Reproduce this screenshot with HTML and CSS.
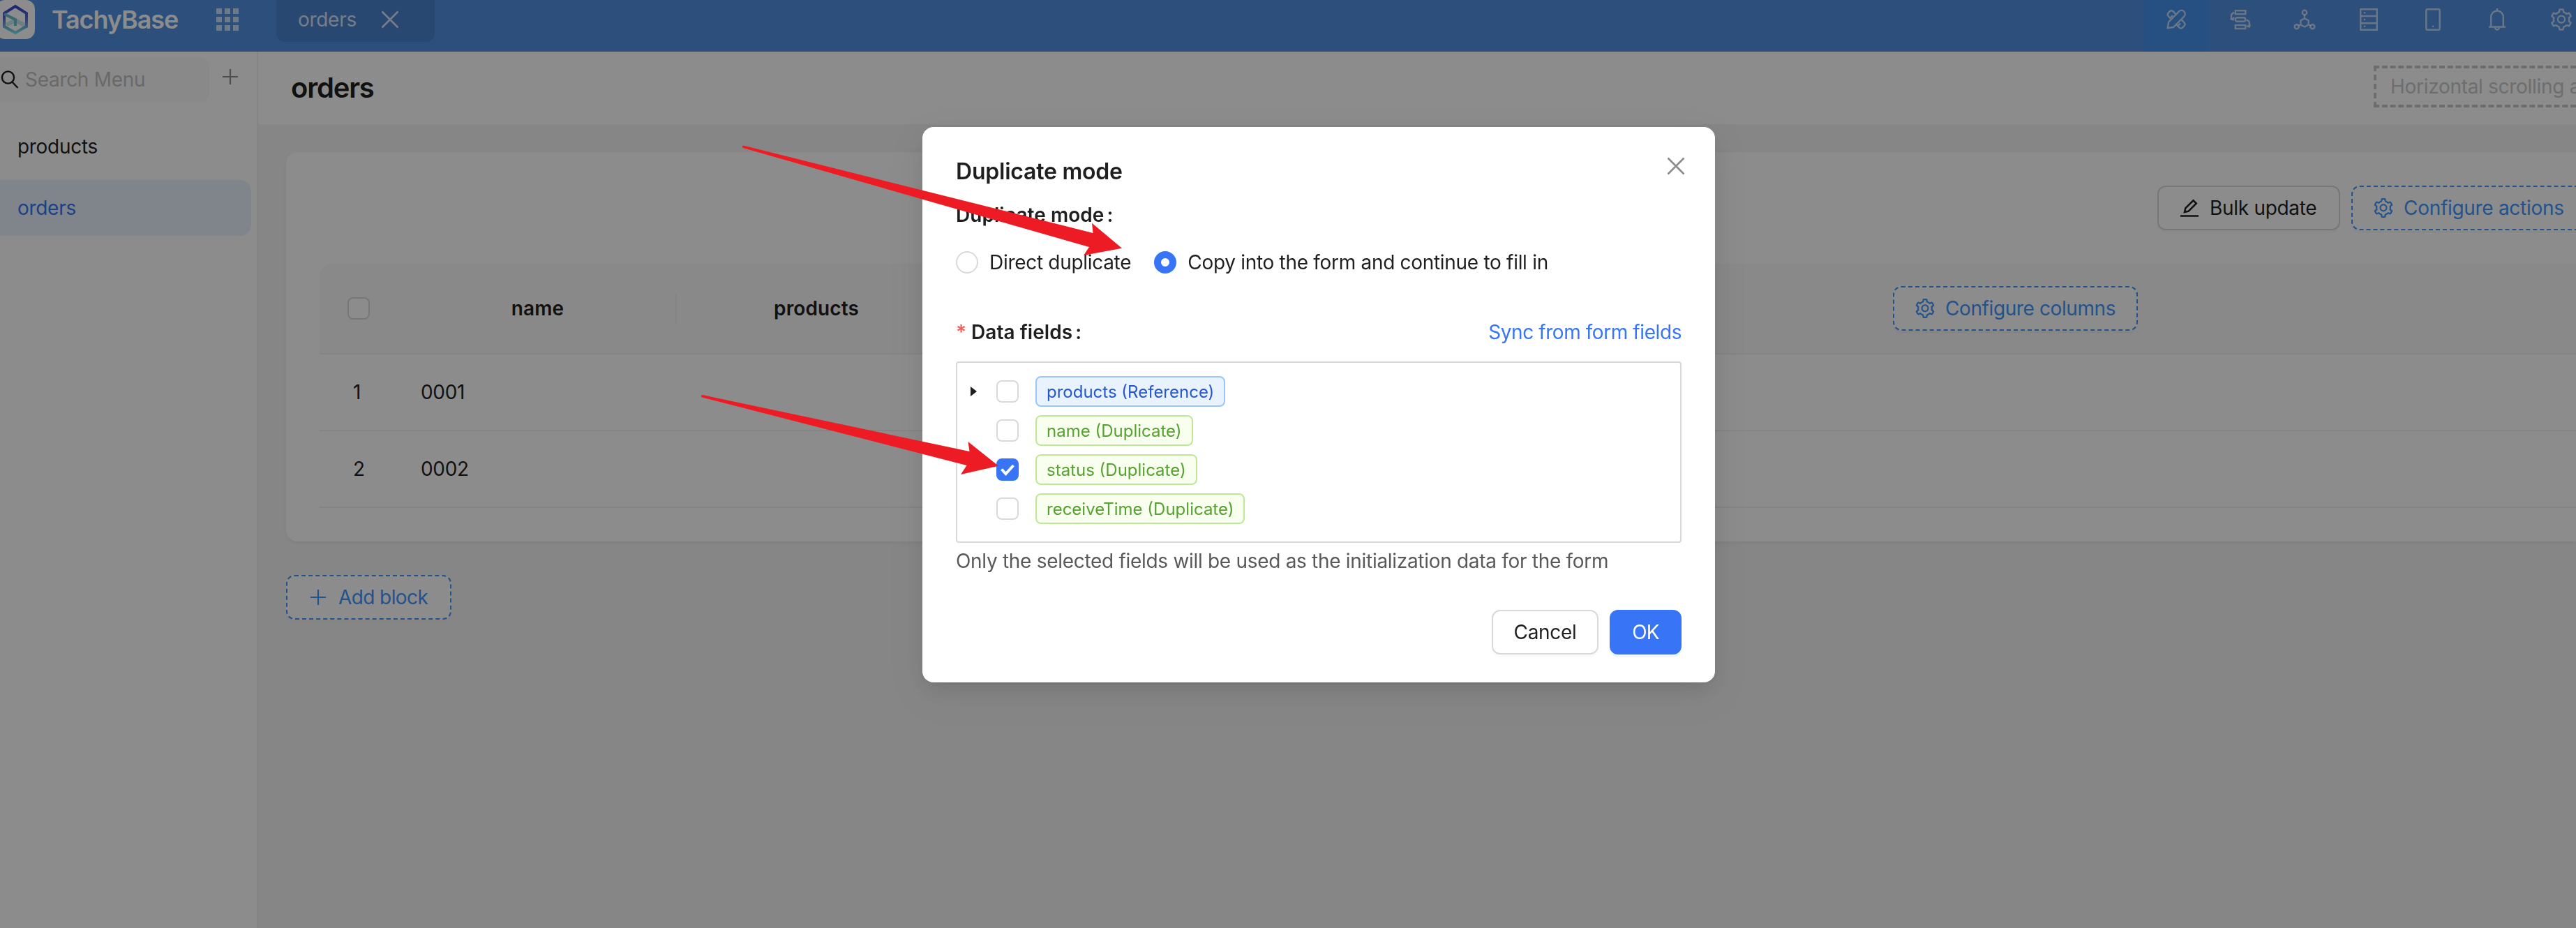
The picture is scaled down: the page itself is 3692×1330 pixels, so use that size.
FILE: index.html
```html
<!DOCTYPE html>
<html lang="en">
<head>
<meta charset="utf-8">
<title>TachyBase - orders</title>
<link rel="stylesheet" href="styles.css">
</head>
<body>
<svg class="sprite" aria-hidden="true">
  <symbol id="gear" viewBox="0 0 1024 1024"><path fill="currentColor" d="M924.8 625.7l-65.5-56c3.1-19 4.7-38.4 4.7-57.8s-1.6-38.8-4.7-57.8l65.5-56a32.03 32.03 0 009.3-35.2l-.9-2.6a443.74 443.74 0 00-79.7-137.9l-1.8-2.1a32.12 32.12 0 00-35.1-9.5l-81.3 28.9c-30-24.6-63.5-44-99.7-57.6l-15.7-85a32.05 32.05 0 00-25.8-25.7l-2.7-.5c-52.1-9.4-106.9-9.4-159 0l-2.7.5a32.05 32.05 0 00-25.8 25.7l-15.8 85.4a351.86 351.86 0 00-99 57.4l-81.9-29.1a32 32 0 00-35.1 9.5l-1.8 2.1a446.02 446.02 0 00-79.7 137.9l-.9 2.6c-4.5 12.5-.8 26.5 9.3 35.2l66.3 56.6c-3.1 18.8-4.6 38-4.6 57.1 0 19.2 1.5 38.4 4.6 57.1L99 625.5a32.03 32.03 0 00-9.3 35.2l.9 2.6c18.1 50.4 44.9 96.9 79.7 137.9l1.8 2.1a32.12 32.12 0 0035.1 9.5l81.9-29.1c29.8 24.5 63.1 43.9 99 57.4l15.8 85.4a32.05 32.05 0 0025.8 25.7l2.7.5a449.4 449.4 0 00159 0l2.7-.5a32.05 32.05 0 0025.8-25.7l15.7-85a350 350 0 0099.7-57.6l81.3 28.9a32 32 0 0035.1-9.5l1.8-2.1c34.8-41.1 61.6-87.5 79.7-137.9l.9-2.6c4.5-12.3.8-26.3-9.3-35zM788.3 465.9c2.5 15.1 3.8 30.6 3.8 46.1s-1.3 31-3.8 46.1l-6.6 40.1 74.7 63.9a370.03 370.03 0 01-42.6 73.6L721 702.8l-31.4 25.8c-23.9 19.6-50.5 35-79.3 45.8l-38.1 14.3-17.9 97a377.5 377.5 0 01-85 0l-17.9-97.2-37.8-14.5c-28.5-10.8-55-26.2-78.7-45.7l-31.4-25.9-93.4 33.2c-17-22.9-31.2-47.6-42.6-73.6l75.5-64.5-6.5-40c-2.4-14.9-3.7-30.3-3.7-45.5 0-15.3 1.2-30.6 3.7-45.5l6.5-40-75.5-64.5c11.3-26.1 25.6-50.7 42.6-73.6l93.4 33.2 31.4-25.9c23.7-19.5 50.2-34.9 78.7-45.7l37.9-14.3 17.9-97.2c28.1-3.2 56.8-3.2 85 0l17.9 97 38.1 14.3c28.7 10.8 55.4 26.2 79.3 45.8l31.4 25.8 92.8-32.9c17 22.9 31.2 47.6 42.6 73.6L781.8 426l6.5 39.9zM512 326c-97.2 0-176 78.8-176 176s78.8 176 176 176 176-78.8 176-176-78.8-176-176-176zm79.2 255.2A111.6 111.6 0 01512 614c-29.9 0-58-11.7-79.2-32.8A111.6 111.6 0 01400 502c0-29.9 11.7-58 32.8-79.2C454 401.6 482.1 390 512 390c29.9 0 58 11.6 79.2 32.8A111.6 111.6 0 01624 502c0 29.9-11.7 58-32.8 79.2z"/></symbol>
  <symbol id="plus" viewBox="0 0 28 28"><path d="M14 3v22M3 14h22" fill="none" stroke="currentColor" stroke-width="2.2"/></symbol>
  <symbol id="close" viewBox="0 0 32 32"><path d="M4.500 4.500l23 23M27.500 4.500l-23 23" fill="none" stroke="currentColor" stroke-width="2.600"/></symbol>
</svg>

<div class="app">
  <header class="topbar">
    <svg class="logo" viewBox="0 0 56 56">
      <defs><linearGradient id="lg" x1="0" y1="0" x2="0" y2="1"><stop offset="0" stop-color="#2f45d6"/><stop offset=".45" stop-color="#6068cc"/><stop offset="1" stop-color="#6fe2ea"/></linearGradient></defs>
      <rect width="56" height="56" rx="13" fill="#fff"/>
      <path d="M14 33l14-7 16 8v7l-5-3-11-5-12 5z" fill="#c3e9ec"/>
      <path d="M38.500 40.500L44 38V19L28 9 12 19v19l16 9 13-7.500" fill="none" stroke="url(#lg)" stroke-width="4"/>
      <path d="M12 20l16 8v9" fill="none" stroke="#63bfd0" stroke-width="4"/>
    </svg>
    <span class="brand">TachyBase</span>
    <svg class="apps" viewBox="0 0 32 32"><path fill="currentColor" d="M0 0h8v8H0zM12 0h8v8h-8zM24 0h8v8h-8zM0 12h8v8H0zM12 12h8v8h-8zM24 12h8v8h-8zM0 24h8v8H0zM12 24h8v8h-8zM24 24h8v8h-8z"/></svg>
    <div class="tab"><span>orders</span><svg class="i32"><use href="#close"/></svg></div>
    <nav class="tools">
      <span class="tool active"><svg viewBox="0 0 36 36"><path d="M5.700 30.200l1.300-8.500L22 6.300a5 5 0 0 1 7.200.3 5 5 0 0 1 .2 6.900L14 29zM17.500 10.500l-4-4.300a3.600 3.600 0 0 0-4.600 0L7 8.200a3.700 3.700 0 0 0-.2 5l4.600 5M10 15l3-3M25 17.500l4.600 5a3.600 3.600 0 0 1 0 4.600L27 29.700a3.400 3.400 0 0 1-4.600-.2L18 25.200M21 26.500l3-3"/></svg></span>
      <span class="tool"><svg viewBox="0 0 36 36"><rect x="10.800" y="5.200" width="14.500" height="5"/><rect x="10.800" y="15.200" width="14.500" height="5.600" rx="2.800"/><rect x="10.800" y="26" width="14.500" height="5"/><path d="M9.300 8C4.500 9 3.500 14 6.500 18.200M3.500 17l4 1.500 1-4M26.700 18.700c4.500 1 5.500 5.500 2.800 9.500M27 27.500l4 .8.800-3.500"/></svg></span>
      <span class="tool"><svg viewBox="0 0 36 36"><circle cx="18" cy="8" r="3.200"/><path d="M18 11.200v5l5.600 3.200v6.200L18 28.500l-5.600-2.900v-6.200L18 16.200M12.400 25.300l-3 1.500M23.600 25.300l3 1.500"/><circle cx="6.700" cy="28.200" r="3"/><circle cx="29.300" cy="28.200" r="3"/></svg></span>
      <span class="tool"><svg viewBox="0 0 36 36"><path d="M6.300 3.200h23.400v29.600H6.300zM6.300 13h23.400M6.300 23.200h23.400M10.800 8.200h2.400M10.800 18h2.400M10.800 27.800h2.400"/></svg></span>
      <span class="tool"><svg viewBox="0 0 36 36"><rect x="8.300" y="3.200" width="19.400" height="29.600" rx="1.500"/><path d="M16.800 27.800h2.400"/></svg></span>
      <span class="tool"><svg viewBox="0 0 36 36"><path d="M18 2v3.200M9.200 28V14.500a8.800 9 0 0 1 17.600 0V28M6 28.500h24M15 29.500a3 3 0 0 0 6 0"/></svg></span>
      <span class="tool"><svg class="solid"><use href="#gear"/></svg></span>
    </nav>
  </header>

  <div class="body">
    <aside class="side">
      <div class="searchrow">
        <div class="search"><svg viewBox="0 0 28 28"><circle cx="11.500" cy="11" r="8.600"/><path d="M17.500 17.500l8 8.500"/></svg><span>Search Menu</span></div>
        <svg class="i28"><use href="#plus"/></svg>
      </div>
      <div class="menu">
        <div class="item">products</div>
        <div class="item selected">orders</div>
      </div>
    </aside>
    <main class="main">
      <div class="pagehead">
        <h1>orders</h1>
        <div class="hint">Horizontal scrolling area</div>
      </div>
      <div class="content">
        <section class="card">
          <div class="actions">
            <button class="btn bulk"><svg class="i28 pen" viewBox="0 0 28 28"><path d="M1 25.500h26M7 20l1.300-5.600L19.500 3.300l4.300 4.200L12.700 18.600z"/></svg><span>Bulk update</span></button>
            <button class="btn dashed"><svg class="i32"><use href="#gear"/></svg><span>Configure actions</span></button>
          </div>
          <div class="table">
            <div class="tr th">
              <div class="c-check"><i class="box"></i></div>
              <div class="c-name">name</div>
              <div class="c-prod">products</div>
              <div class="c-conf"><button class="btn dashed"><svg class="i32"><use href="#gear"/></svg><span>Configure columns</span></button></div>
            </div>
            <div class="tr"><div class="c-check">1</div><div class="c-name">0001</div></div>
            <div class="tr"><div class="c-check">2</div><div class="c-name">0002</div></div>
          </div>
        </section>
        <button class="btn dashed add"><svg class="i28"><use href="#plus"/></svg><span>Add block</span></button>
      </div>
    </main>
  </div>
</div>

<div class="mask">
  <div class="modal" role="dialog">
    <svg class="x"><use href="#close"/></svg>
    <h2>Duplicate mode</h2>
    <div class="label">Duplicate mode<b>:</b></div>
    <div class="radios">
      <label><i class="radio"></i>Direct duplicate</label>
      <label><i class="radio on"></i>Copy into the form and continue to fill in</label>
    </div>
    <div class="fieldrow"><div class="label"><em>*</em>Data fields<b>:</b></div><a class="link">Sync from form fields</a></div>
    <div class="tree">
      <div class="node"><i class="caret"></i><i class="box"></i><span class="tag blue">products (Reference)</span></div>
      <div class="node"><i class="caret none"></i><i class="box"></i><span class="tag">name (Duplicate)</span></div>
      <div class="node"><i class="caret none"></i><i class="box on"><svg viewBox="0 0 32 32"><path d="M7.500 15.500l6 6.500L24.500 10" fill="none" stroke="#fff" stroke-width="4"/></svg></i><span class="tag">status (Duplicate)</span></div>
      <div class="node"><i class="caret none"></i><i class="box"></i><span class="tag">receiveTime (Duplicate)</span></div>
    </div>
    <p class="help">Only the selected fields will be used as the initialization data for the form</p>
    <div class="footer"><button class="btn cancel">Cancel</button><button class="btn ok">OK</button></div>
  </div>
</div>

<svg class="arrows" viewBox="0 0 3692 1330">
  <path d="M1065.500 208.500L1566.500 334L1565 319.700L1608 355.700L1553 366L1561 354L1065 212Q1062 209.500 1065.500 208.500Z"/>
  <path d="M1007 566L1389.500 647L1387.500 633L1431 667.700L1377 680L1385.500 667L1006 569.500Q1003 566.500 1007 566Z"/>
</svg>
</body>
</html>
```
FILE: styles.css
```css
* { box-sizing: border-box; }
body {
  margin: 0;
  height: 1330px;
  overflow: hidden;
  font: 400 28px/44px Inter, "Liberation Sans", sans-serif;
  letter-spacing: -.3px;
  color: #1f1f1f;
  background: #f5f5f5;
}
i, em { font-style: normal; display: block; }
svg { display: block; flex: none; }
.sprite { position: absolute; width: 0; height: 0; }
.i28 { width: 28px; height: 28px; }
.i32 { width: 32px; height: 32px; }
.app { display: flex; flex-direction: column; height: 1330px; width: 3692px; overflow: hidden; }

/* top bar */
.topbar { height: 74px; flex: none; display: flex; align-items: flex-start; background: #5090e1; color: rgba(255,255,255,.65); }
.logo { width: 56px; height: 56px; margin-left: -6px; }
.brand { width: 236px; margin-left: 24px; font-size: 36px; line-height: 56px; font-weight: 600; letter-spacing: -1.1px; color: #fff; }
.apps { width: 32px; height: 32px; margin-top: 12px; color: #cbdff7; }
.tab { width: 227px; height: 60px; margin-left: 54px; padding: 0 0 4px 31px; border-radius: 0 0 12px 12px; background: rgba(0,0,0,.08); display: flex; align-items: center; color: #d5e4f7; }
.tab span { width: 116px; }
.tools { margin-left: auto; display: flex; width: 619px; overflow: hidden; }
.tool { flex: none; width: 92px; height: 74px; padding: 10px 28px; }
.tool:last-child { width: 67px; padding-right: 0; }
.tool.active { background: #4692ed; }
.tool svg { width: 36px; height: 36px; fill: none; stroke: currentColor; stroke-width: 2.400; }
.tool .solid { stroke: none; }

/* sidebar */
.body { flex: 1; display: flex; min-height: 0; }
.side { width: 370px; flex: none; background: #fff; border-right: 2px solid #f0f0f0; }
.searchrow { display: flex; height: 96px; padding-top: 8px; }
.search { width: 300px; height: 64px; border-radius: 0 12px 12px 0; background: #fafafa; display: flex; align-items: center; color: #bfbfbf; }
.search svg { width: 28px; height: 28px; margin-right: 8px; fill: none; stroke: #1f1f1f; stroke-width: 2.400; }
.searchrow > svg { margin: 14px 0 0 16px; color: #8c8c8c; }
.menu { display: flex; flex-direction: column; gap: 8px; width: 360px; }
.item { height: 80px; padding: 18px 0 0 25px; }
.item.selected { background: #e9f2ff; color: #3875f6; border-radius: 0 16px 16px 0; }

/* page */
.main { flex: 1; min-width: 0; display: flex; flex-direction: column; }
.pagehead { height: 104px; background: #fff; display: flex; justify-content: space-between; align-items: center; padding-left: 47px; overflow: hidden; }
h1 { margin: 0; font-size: 40px; line-height: 56px; font-weight: 600; letter-spacing: -1.2px; }
.hint { width: 290px; height: 60px; margin-top: -4px; padding: 4px 0 0 20px; border: 4px dashed #c6c6c6; border-right: 0; color: #c8c8c8; white-space: nowrap; overflow: hidden; }
.content { flex: 1; background: #f5f5f5; padding: 40px 0 0 40px; }
.card { height: 558px; padding: 48px 0 0 48px; background: #fff; border-radius: 16px 0 0 16px; box-shadow: 0 2px 4px rgba(0,0,0,.04), 0 2px 12px rgba(0,0,0,.03); }
.actions { display: flex; justify-content: flex-end; gap: 16px; overflow: hidden; height: 68px; margin-bottom: 44px; }
.actions .btn { flex: none; }
.actions .bulk { width: 262px; }
.actions .dashed { width: 322px; border-right: 0; border-radius: 12px 0 0 12px; }
.btn { height: 64px; padding: 0 30px; border: 2px solid #d9d9d9; border-radius: 12px; background: #fff; font: inherit; letter-spacing: inherit; color: inherit; display: flex; align-items: center; gap: 15px; box-shadow: 0 4px 0 rgba(0,0,0,.02); white-space: nowrap; }
.btn.dashed { border-style: dashed; border-color: #4096ff; color: #4096ff; padding: 0 28px; gap: 13px; }
.pen { fill: none; stroke: currentColor; stroke-width: 2.500; }
.table { display: flex; flex-direction: column; }
.tr { height: 110px; display: flex; align-items: center; border-bottom: 2px solid #f0f0f0; }
.tr.th { height: 130px; background: #fafafa; border-radius: 16px 0 0 0; font-weight: 600; letter-spacing: .1px; }
.c-check { width: 112px; padding-left: 48px; }
.th .c-check { padding-left: 40px; }
.c-name { width: 400px; padding-left: 33px; }
.th .c-name { padding: 0 0 0 3px; height: 44px; text-align: center; border-right: 2px solid #f0f0f0; }
.c-prod { width: 400px; text-align: center; }
.c-conf { margin-left: 1343px; font-weight: 400; letter-spacing: -.4px; }
.c-conf .btn { width: 351px; }
.add { width: 237px; margin-top: 48px; }
.btn.add { padding: 0 30px; gap: 15px; letter-spacing: -.6px; }
.box { width: 32px; height: 32px; border: 2px solid #d9d9d9; border-radius: 8px; background: #fff; }
.box.on { border: 0; background: #3875f6; }

/* modal */
.mask { position: fixed; inset: 0; background: rgba(0,0,0,.45); }
.modal { position: absolute; left: 1322px; top: 182px; width: 1136px; height: 796px; padding: 40px 48px 0; background: #fff; border-radius: 16px; box-shadow: 0 12px 32px rgba(0,0,0,.08), 0 6px 12px -8px rgba(0,0,0,.12), 0 18px 56px 16px rgba(0,0,0,.05); }
.x { position: absolute; right: 40px; top: 40px; width: 32px; height: 32px; color: #8c8c8c; }
h2 { margin: 0; font-size: 32px; line-height: 48px; font-weight: 600; letter-spacing: -.23px; }
.label { margin-top: 16px; font-weight: 600; letter-spacing: .05px; display: flex; }
.label b { margin-left: 4px; font-weight: 600; }
.label em { color: #f5605a; width: 22px; }
.radios { display: flex; margin-top: 24px; gap: 33px; }
.radios label { display: flex; align-items: center; gap: 16px; }
.radio { width: 32px; height: 32px; border-radius: 50%; border: 2px solid #d9d9d9; }
.radio.on { border: 10px solid #3875f6; }
.fieldrow { display: flex; justify-content: space-between; margin-top: 56px; }
.fieldrow .label { margin-top: 0; }
.link { color: #3875f6; letter-spacing: -.42px; }
.tree { margin-top: 20px; height: 260px; border: 2px solid #d9d9d9; border-radius: 4px; padding: 14px 0 0 19px; }
.node { display: flex; align-items: center; height: 56px; padding-bottom: 2px; }
.caret { width: 37px; height: 14px; }
.caret::before { content: ""; display: block; width: 0; border-left: 9px solid #1f1f1f; border-top: 7px solid transparent; border-bottom: 7px solid transparent; }
.caret.none::before { display: none; }
.tag { margin-left: 24px; height: 44px; padding: 0 14px; border: 2px solid #bfe896; border-radius: 8px; background: #f8ffee; color: #56a12f; font-size: 24px; line-height: 41px; letter-spacing: 0; }
.tag.blue { border-color: #98c6fb; background: #e9f3ff; color: #2456d0; }
.help { margin: 4px 0 0; color: #595959; }
.footer { display: flex; justify-content: flex-end; gap: 16px; margin-top: 48px; }
.cancel { width: 153px; justify-content: center; padding: 0; }
.ok { width: 103px; justify-content: center; padding: 0; border: 0; background: #3875f6; color: #fff; letter-spacing: -.8px; box-shadow: 0 4px 0 rgba(5,145,255,.08); }
.arrows { position: fixed; left: 0; top: 0; width: 3692px; height: 1330px; fill: #ed1c24; pointer-events: none; }
```
